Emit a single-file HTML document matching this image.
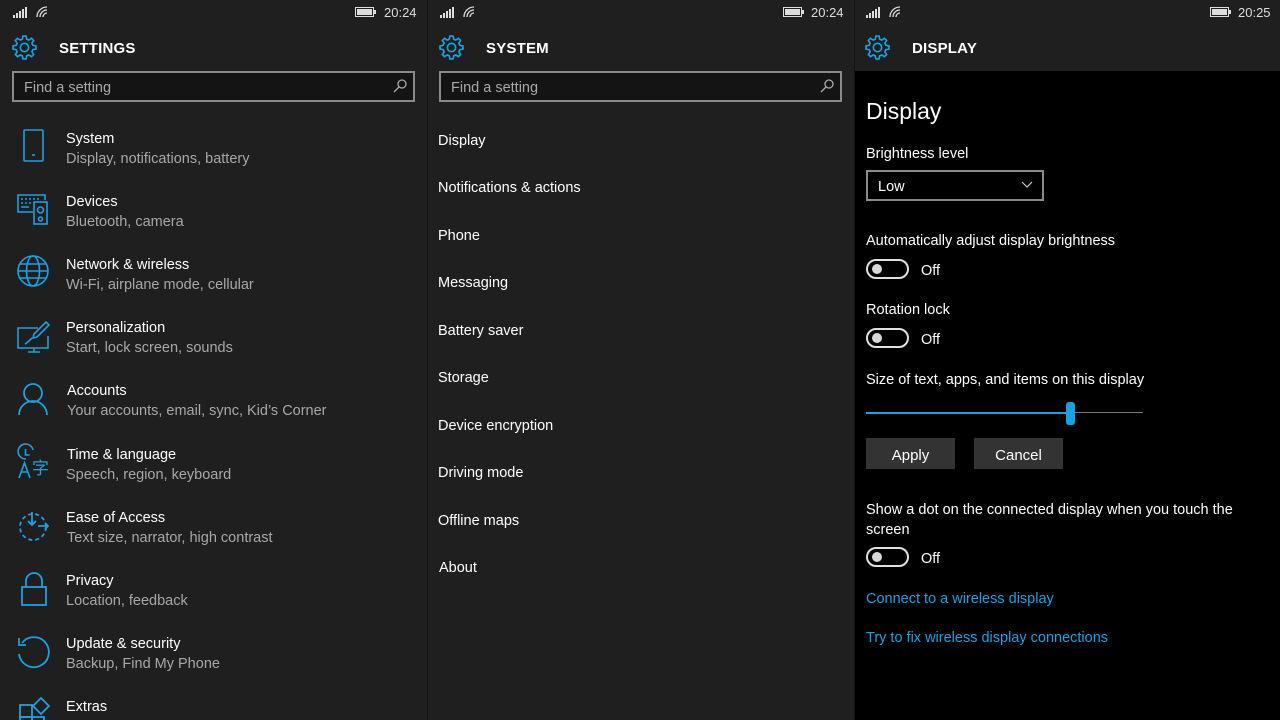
<!DOCTYPE html><html><head><meta charset="utf-8"><style>
*{margin:0;padding:0;box-sizing:border-box}
html{width:1280px;height:720px;overflow:hidden}
body{width:1280px;height:720px;background:#1f1f1f;font-family:"Liberation Sans","Noto Sans CJK SC",sans-serif;color:#fff;position:relative;overflow:hidden}
.p{position:absolute;top:0;height:720px;background:#1f1f1f;overflow:hidden}
.a{position:absolute;white-space:nowrap;margin-top:2px}
.t{font-size:14.5px;color:#fff}
.s{font-size:14.5px;color:#a8a8a8}
.h{font-size:15px;font-weight:bold;letter-spacing:.2px}
.search{position:absolute;height:31px;border:2px solid #8a8a8a;background:#141414;color:#a8a8a8;font-size:14.5px;padding:7px 10px 0}
.clock{font-size:13px;color:#ddd;margin-top:0}
.tog{position:absolute;width:43px;height:20px;border:2px solid #e0e0e0;border-radius:10px}
.tog:after{content:"";position:absolute;left:4px;top:3px;width:10px;height:10px;border-radius:50%;background:#d8d8d8}
.btn{position:absolute;height:31px;background:#333;color:#fff;font-size:15px;text-align:center;line-height:35px}
.lnk{color:#1ba1e2;font-size:14.5px}
svg{position:absolute;overflow:visible}
</style></head><body>
<svg width="0" height="0"><defs>
<g id="gear" fill="none" stroke="#1ba1e2" stroke-width="1.6"><path d="M10.5 1h3l.6 3 2 .9 2.6-1.7 2.1 2.1-1.7 2.6.9 2 3 .6v3l-3 .6-.9 2 1.7 2.6-2.1 2.1-2.6-1.7-2 .9-.6 3h-3l-.6-3-2-.9-2.6 1.7-2.1-2.1 1.7-2.6-.9-2-3-.6v-3l3-.6.9-2-1.7-2.6 2.1-2.1 2.6 1.7 2-.9z"/><circle cx="12" cy="12" r="4"/></g>
<g id="stat" fill="#ddd"><rect x="0" y="8" width="2" height="3"/><rect x="3" y="6" width="2" height="5"/><rect x="6" y="4" width="2" height="7"/><rect x="9" y="2" width="2" height="9"/><rect x="12" y="0" width="2" height="11"/></g>
<g id="wifi" fill="none" stroke="#ddd" stroke-width="1.3"><path d="M1 11a10 10 0 0 1 10-10M4 11a7 7 0 0 1 7-7M7 11a4 4 0 0 1 4-4"/></g>
<g id="bat"><rect x="0.5" y="0.5" width="18" height="9" fill="none" stroke="#ddd"/><rect x="2" y="2" width="15" height="6" fill="#ddd"/><rect x="19" y="3" width="2" height="4" fill="#ddd"/></g>
</defs></svg>

<!-- Panel 1 -->
<div class="p" style="left:0;width:427px">
<svg style="left:13px;top:7px" width="16" height="12"><use href="#stat"/></svg>
<svg style="left:36px;top:6px" width="14" height="13"><use href="#wifi"/></svg>
<svg style="left:355px;top:7px" width="22" height="10"><use href="#bat"/></svg>
<div class="a clock" style="left:384px;top:5px">20:24</div>
<svg style="left:12px;top:35px" width="25" height="25" viewBox="0 0 24 24"><use href="#gear"/></svg>
<div class="a h" style="left:59px;top:38px">SETTINGS</div>
<div class="search" style="left:12px;top:71px;width:403px">Find a setting</div>
<svg style="left:393px;top:79px" width="14" height="14" fill="none" stroke="#aaa" stroke-width="1.3"><circle cx="9" cy="5" r="4"/><path d="M6 8 1 13"/></svg>

<svg style="left:16px;top:128px" width="34" height="36" fill="none" stroke="#1ba1e2" stroke-width="1.6"><rect x="8" y="2" width="19" height="31" rx="1"/><path d="M16 27h3"/></svg>
<div class="a t" style="left:66px;top:129px">System</div><div class="a s" style="left:66px;top:149px">Display, notifications, battery</div>

<svg style="left:16px;top:192px" width="36" height="36" fill="none" stroke="#1ba1e2" stroke-width="1.6"><path d="M17 20H2V3h27v5"/><path d="M5 7h2M9 7h2M13 7h2M17 7h2M21 7h2M5 11h2M9 11h2M13 11h2M5 15h8"/><rect x="18" y="10" width="13" height="22"/><circle cx="24.5" cy="18" r="3"/><circle cx="24.5" cy="27" r="2"/></svg>
<div class="a t" style="left:66px;top:192px">Devices</div><div class="a s" style="left:66px;top:212px">Bluetooth, camera</div>

<svg style="left:16px;top:254px" width="36" height="36" fill="none" stroke="#1ba1e2" stroke-width="1.6"><circle cx="17" cy="17" r="15"/><ellipse cx="17" cy="17" rx="6.5" ry="15"/><path d="M2 17h30M4 10h26M4 24h26"/></svg>
<div class="a t" style="left:66px;top:255px">Network &amp; wireless</div><div class="a s" style="left:66px;top:275px">Wi-Fi, airplane mode, cellular</div>

<svg style="left:16px;top:318px" width="36" height="36" fill="none" stroke="#1ba1e2" stroke-width="1.6"><path d="M22 10H2v20h30V18"/><path d="M12 34h12M18 30v4"/><path d="M30 4l3 3-12 12-4 1 1-4z"/><path d="M9 26c2-1 4-3 7-6"/></svg>
<div class="a t" style="left:66px;top:318px">Personalization</div><div class="a s" style="left:66px;top:338px">Start, lock screen, sounds</div>

<svg style="left:16px;top:382px" width="36" height="36" fill="none" stroke="#1ba1e2" stroke-width="1.8"><circle cx="17" cy="11" r="9"/><path d="M3 33a14 14 0 0 1 28 0"/></svg>
<div class="a t" style="left:67px;top:381px">Accounts</div><div class="a s" style="left:67px;top:401px">Your accounts, email, sync, Kid’s Corner</div>

<svg style="left:16px;top:444px" width="36" height="36" fill="none" stroke="#1ba1e2" stroke-width="1.6"><path d="M10 15A7.5 7.5 0 1 1 17 6"/><path d="M9.5 5v6h4"/><path d="M3 34 8.5 19 14 34M5 28h7"/></svg>
<div class="a" style="left:32px;top:454px;color:#1ba1e2;font-size:17px;font-family:'Noto Sans CJK SC',sans-serif;margin-top:0">字</div>
<div class="a t" style="left:67px;top:445px">Time &amp; language</div><div class="a s" style="left:66px;top:465px">Speech, region, keyboard</div>

<svg style="left:16px;top:508px" width="36" height="36" fill="none" stroke="#1ba1e2" stroke-width="1.8" stroke-dasharray="4 3"><circle cx="17" cy="19" r="13"/></svg>
<svg style="left:16px;top:508px" width="36" height="36" fill="none" stroke="#1ba1e2" stroke-width="1.8"><path d="M16 4v13M12 13l4 4 4-4M22 18h10M29 15l3 3-3 3"/></svg>
<div class="a t" style="left:66px;top:508px">Ease of Access</div><div class="a s" style="left:67px;top:528px">Text size, narrator, high contrast</div>

<svg style="left:16px;top:571px" width="36" height="36" fill="none" stroke="#1ba1e2" stroke-width="1.8"><rect x="6" y="16" width="24" height="18"/><path d="M10 16V10a8 8 0 0 1 16 0v6"/></svg>
<div class="a t" style="left:66px;top:571px">Privacy</div><div class="a s" style="left:66px;top:591px">Location, feedback</div>

<svg style="left:16px;top:634px" width="36" height="36" fill="none" stroke="#1ba1e2" stroke-width="1.8"><path d="M6 9A15 15 0 1 1 3 20"/><path d="M3 4v7h7"/></svg>
<div class="a t" style="left:66px;top:634px">Update &amp; security</div><div class="a s" style="left:66px;top:654px">Backup, Find My Phone</div>

<svg style="left:16px;top:697px" width="36" height="30" fill="none" stroke="#1ba1e2" stroke-width="1.8"><rect x="4" y="8" width="12" height="12"/><rect x="4" y="20" width="12" height="12"/><rect x="16" y="20" width="12" height="12"/><path d="M25 1l8 8-8 8-8-8z"/></svg>
<div class="a t" style="left:66px;top:697px">Extras</div>
</div>

<div style="position:absolute;left:427px;top:0;width:1px;height:720px;background:#141414"></div>

<!-- Panel 2 -->
<div class="p" style="left:428px;width:426px">
<svg style="left:12px;top:7px" width="16" height="12"><use href="#stat"/></svg>
<svg style="left:35px;top:6px" width="14" height="13"><use href="#wifi"/></svg>
<svg style="left:355px;top:7px" width="22" height="10"><use href="#bat"/></svg>
<div class="a clock" style="left:383px;top:5px">20:24</div>
<svg style="left:11px;top:35px" width="25" height="25" viewBox="0 0 24 24"><use href="#gear"/></svg>
<div class="a h" style="left:58px;top:38px">SYSTEM</div>
<div class="search" style="left:11px;top:71px;width:403px">Find a setting</div>
<svg style="left:392px;top:79px" width="14" height="14" fill="none" stroke="#aaa" stroke-width="1.3"><circle cx="9" cy="5" r="4"/><path d="M6 8 1 13"/></svg>
<div class="a t" style="left:10px;top:131px">Display</div>
<div class="a t" style="left:10px;top:178px">Notifications &amp; actions</div>
<div class="a t" style="left:10px;top:226px">Phone</div>
<div class="a t" style="left:10px;top:273px">Messaging</div>
<div class="a t" style="left:10px;top:321px">Battery saver</div>
<div class="a t" style="left:10px;top:368px">Storage</div>
<div class="a t" style="left:10px;top:416px">Device encryption</div>
<div class="a t" style="left:10px;top:463px">Driving mode</div>
<div class="a t" style="left:10px;top:511px">Offline maps</div>
<div class="a t" style="left:11px;top:558px">About</div>
</div>

<div style="position:absolute;left:854px;top:0;width:1px;height:720px;background:#141414"></div>

<!-- Panel 3 -->
<div class="p" style="left:855px;width:425px;background:#000">
<div style="position:absolute;left:0;top:0;width:425px;height:71px;background:#1f1f1f"></div>
<svg style="left:11px;top:7px" width="16" height="12"><use href="#stat"/></svg>
<svg style="left:34px;top:6px" width="14" height="13"><use href="#wifi"/></svg>
<svg style="left:355px;top:7px" width="22" height="10"><use href="#bat"/></svg>
<div class="a clock" style="left:383px;top:5px">20:25</div>
<svg style="left:10px;top:35px" width="25" height="25" viewBox="0 0 24 24"><use href="#gear"/></svg>
<div class="a h" style="left:57px;top:38px">DISPLAY</div>
<div class="a" style="left:11px;top:96px;font-size:23px">Display</div>
<div class="a t" style="left:11px;top:144px">Brightness level</div>
<div style="position:absolute;left:11px;top:170px;width:178px;height:31px;border:2px solid #8a8a8a"></div>
<div class="a t" style="left:23px;top:177px">Low</div>
<svg style="left:166px;top:181px" width="12" height="8" fill="none" stroke="#ccc" stroke-width="1.2"><path d="M1 1l5 5 5-5"/></svg>
<div class="a t" style="left:11px;top:231px">Automatically adjust display brightness</div>
<div class="tog" style="left:11px;top:259px"></div><div class="a t" style="left:66px;top:261px">Off</div>
<div class="a t" style="left:11px;top:300px">Rotation lock</div>
<div class="tog" style="left:11px;top:328px"></div><div class="a t" style="left:66px;top:330px">Off</div>
<div class="a t" style="left:11px;top:370px">Size of text, apps, and items on this display</div>
<div style="position:absolute;left:11px;top:412px;width:205px;height:2px;background:#1ba1e2"></div>
<div style="position:absolute;left:216px;top:412px;width:72px;height:1px;background:#777"></div>
<div style="position:absolute;left:211px;top:402px;width:9px;height:23px;border-radius:3px;background:#1ba1e2"></div>
<div class="btn" style="left:11px;top:438px;width:89px">Apply</div>
<div class="btn" style="left:119px;top:438px;width:89px">Cancel</div>
<div class="a t" style="left:11px;top:500px">Show a dot on the connected display when you touch the</div>
<div class="a t" style="left:11px;top:520px">screen</div>
<div class="tog" style="left:11px;top:547px"></div><div class="a t" style="left:66px;top:549px">Off</div>
<div class="a lnk" style="left:11px;top:589px">Connect to a wireless display</div>
<div class="a lnk" style="left:11px;top:628px">Try to fix wireless display connections</div>
</div>
</body></html>
